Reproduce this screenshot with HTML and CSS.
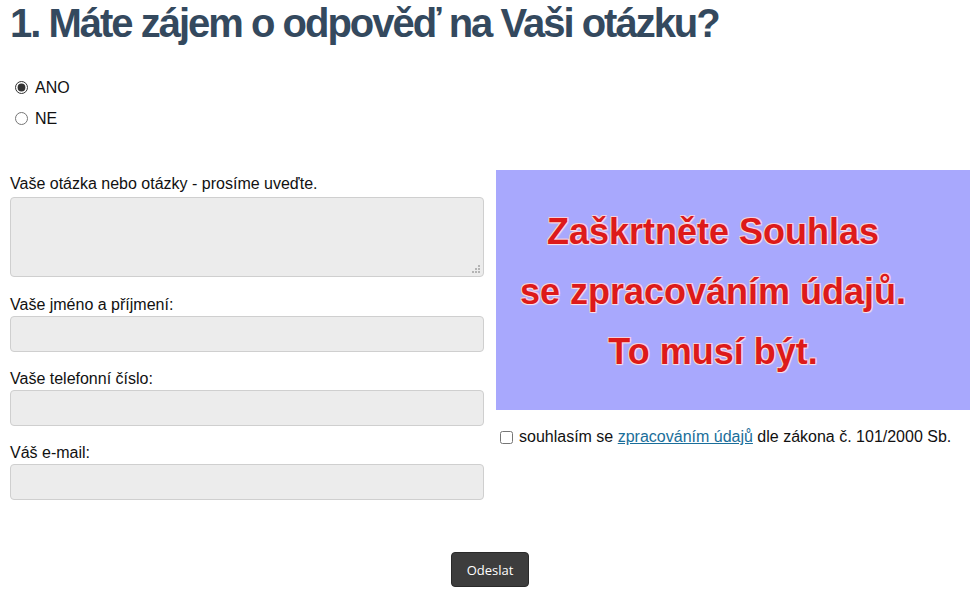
FILE: index.html
```html
<!DOCTYPE html>
<html lang="cs">
<head>
    <meta charset="UTF-8">
    <meta name="viewport" content="width=device-width, initial-scale=1.0">
    <title>Dotaz</title>
    <link rel="stylesheet" href="styles.css">
</head>
<body>
    <h1 class="question-title">1. Máte zájem o odpověď na Vaši otázku?</h1>

    <div class="answer-choices">
        <label class="choice"><input type="radio" name="zajem" checked> ANO</label>
        <label class="choice"><input type="radio" name="zajem"> NE</label>
    </div>

    <form class="contact-form">
        <div class="form-columns">
            <div class="form-left">
                <label class="field-label" for="otazka">Vaše otázka nebo otázky - prosíme uveďte.</label>
                <textarea id="otazka" class="field field-area"></textarea>

                <label class="field-label" for="jmeno">Vaše jméno a příjmení:</label>
                <input type="text" id="jmeno" class="field">

                <label class="field-label" for="telefon">Vaše telefonní číslo:</label>
                <input type="text" id="telefon" class="field">

                <label class="field-label" for="email">Váš e-mail:</label>
                <input type="text" id="email" class="field">
            </div>

            <div class="form-right">
                <div class="consent-banner">
                    <p>Zaškrtněte Souhlas</p>
                    <p>se zpracováním údajů.</p>
                    <p>To musí být.</p>
                </div>
                <div class="consent-line">
                    <input type="checkbox" id="souhlas">
                    <label for="souhlas">souhlasím se <a href="#">zpracováním údajů</a> dle zákona č. 101/2000 Sb.</label>
                </div>
            </div>
        </div>

        <div class="form-submit">
            <button type="button" class="submit-button">Odeslat</button>
        </div>
    </form>
</body>
</html>
```

FILE: styles.css
```css
body { margin: 0; padding: 0 10px; font-family: "Liberation Sans", Arial, sans-serif; font-size: 16px; color: #111; background: #fff; }

.question-title {
    font-family: "Liberation Sans", Arial, sans-serif;
    font-weight: bold;
    font-size: 40px;
    line-height: 46px;
    letter-spacing: -2px;
    color: #34495e;
    margin: 0 0 26px 0;
}

/* ANO / NE */
.answer-choices { padding-left: 5px; }
.choice { display: flex; align-items: center; gap: 7px; height: 31px; }
.choice input { margin: 0; width: 13px; height: 13px; accent-color: #333; }

/* Formular */
.contact-form { margin-top: 36px; width: 960px; }
.form-columns { display: flex; gap: 12px; }
.form-left, .form-right { width: 474px; }
.form-left { display: flex; flex-direction: column; padding-top: 5px; }

.field-label { display: block; line-height: 18px; margin-bottom: 2px; }
.field {
    display: block;
    box-sizing: border-box;
    width: 100%;
    height: 36px;
    margin: 0 0 18px 0;
    background: #ececec;
    border: 1px solid #cfcfcf;
    border-radius: 4px;
    font: inherit;
}
.field-area {
    height: 80px;
    margin-top: 2px;
    margin-bottom: 19px;
    resize: none;
    /* tečkovaný úchyt vpravo dole */
    background-image:
        linear-gradient(#b4b4b4, #b4b4b4), linear-gradient(#b4b4b4, #b4b4b4), linear-gradient(#b4b4b4, #b4b4b4),
        linear-gradient(#b4b4b4, #b4b4b4), linear-gradient(#b4b4b4, #b4b4b4), linear-gradient(#b4b4b4, #b4b4b4);
    background-size: 2px 2px;
    background-repeat: no-repeat;
    background-position:
        right 3px bottom 3px, right 6px bottom 3px, right 9px bottom 3px,
        right 3px bottom 6px, right 6px bottom 6px, right 3px bottom 9px;
}

.consent-banner {
    background: #a8a8fd;
    height: 240px;
    box-sizing: border-box;
    padding: 32px 40px 0 0;
    text-align: center;
    font-weight: bold;
    font-size: 36px;
    color: #dd1a1a;
    text-shadow: 1px 1px 1px #fbe3e8, -1px -1px 0 #f4d0dc, 1px -1px 0 #f4d0dc, -1px 1px 0 #f4d0dc;
}
.consent-banner p { margin: 0; line-height: 60px; }

.consent-line { display: flex; align-items: center; gap: 6px; margin: 18px 0 0 4px; }
.consent-line input { margin: 0; width: 13px; height: 13px; }
.consent-line a { color: #1a6e9a; text-decoration: underline; }

.form-submit { text-align: center; margin-top: 34px; }
.submit-button {
    width: 78px;
    height: 35px;
    background: #3d3d3d;
    color: #fff;
    border: 1px solid #2a2a2a;
    border-radius: 4px;
    font-family: "Open Sans", "DejaVu Sans", sans-serif;
    font-size: 13px;
    cursor: pointer;
}
```
